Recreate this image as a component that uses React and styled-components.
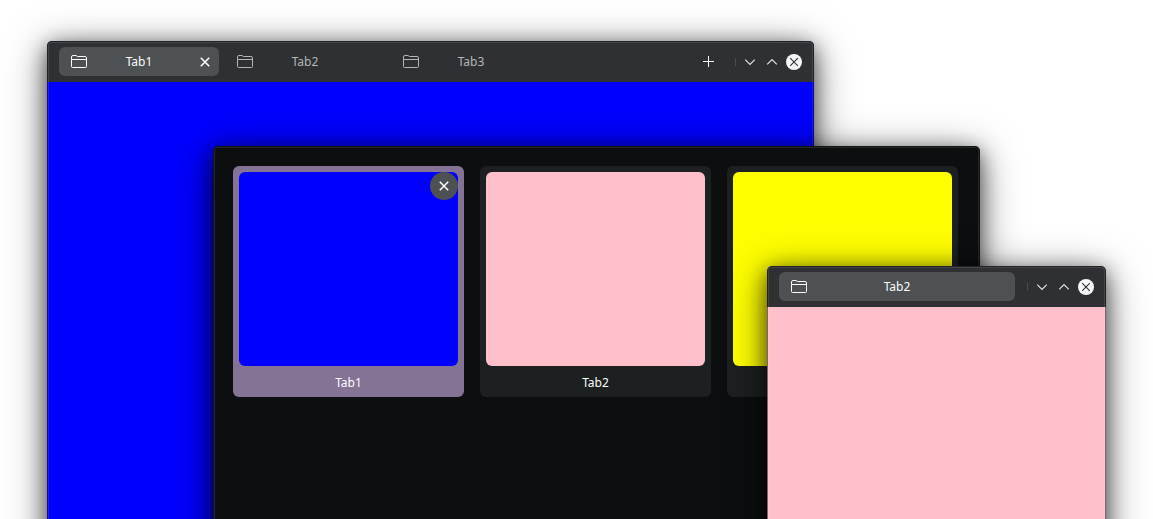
import React from "react";
import styled, { createGlobalStyle, css } from "styled-components";

const GlobalStyle = createGlobalStyle`
  * { box-sizing: border-box; }
  body {
    margin: 0;
    background: #ffffff;
    font-family: "Noto Sans", sans-serif;
    font-size: 12px;
    line-height: 16px;
  }
  button {
    margin: 0;
    padding: 0;
    border: 0;
    background: none;
    color: inherit;
    font: inherit;
  }
`;

const Desktop = styled.main`
  position: relative;
  height: 100vh;
  overflow: hidden;
`;

const Window = styled.section`
  position: absolute;
  left: ${(p) => p.$left}px;
  right: ${(p) => p.$right}px;
  top: ${(p) => p.$top}px;
  bottom: -40px;
  display: flex;
  flex-direction: column;
  overflow: hidden;
  border-radius: 5px;
  background: ${(p) => p.$color};
  box-shadow: 0 5px 20px rgba(0, 0, 0, 0.55), 0 8px 40px rgba(0, 0, 0, 0.5);

  &::after {
    content: "";
    position: absolute;
    inset: 0;
    border-radius: 5px;
    box-shadow: inset 0 0 0 1px rgba(0, 0, 0, 0.5),
      inset 0 0 0 2px rgba(255, 255, 255, 0.1);
    pointer-events: none;
  }
`;

const TitleBar = styled.header`
  display: flex;
  align-items: center;
  gap: 12px;
  height: 41px;
  padding: 0 12px;
  background: #2f3034;
  color: #fcfcfc;
`;

const TabList = styled.div`
  display: flex;
  flex: 1;
  gap: 6px;
`;

const TabItem = styled.div`
  display: flex;
  align-items: center;
  width: 160px;
  height: 29px;
  padding: 0 6px 0 12px;
  border-radius: 6px;
  color: #b4b5b7;
  ${(p) => p.$wide && css`
    width: auto;
    flex: 1;
  `}
  ${(p) => p.$active && css`
    background: #4d5153;
    color: #fcfcfc;
  `}
`;

const TabButton = styled.button`
  flex: 1;
  height: 100%;
  text-align: center;
`;

const TabEnd = styled.span`
  display: flex;
  justify-content: flex-end;
  width: 22px;
`;

const IconButton = styled.button`
  display: flex;
  align-items: center;
  justify-content: center;
  width: ${(p) => p.$size}px;
  height: ${(p) => p.$size}px;
`;

const WindowControls = styled.div`
  display: flex;
  align-items: center;
  gap: 6px;
`;

const Separator = styled.span`
  width: 1px;
  height: 8px;
  background: #4b4c50;
`;

const Overview = styled.div`
  display: grid;
  grid-template-columns: repeat(3, 1fr);
  gap: 16px;
  padding: 20px 22px 20px 20px;
`;

const Card = styled.article`
  position: relative;
  padding: 6px 6px 0;
  border-radius: 6px;
  background: ${(p) => (p.$active ? "#857396" : "#1d2021")};
  color: #fcfcfc;
`;

const Preview = styled.div`
  height: 194px;
  border-radius: 6px;
  background: ${(p) => p.$color};
`;

const CardButton = styled.button`
  display: block;
  width: 100%;
  height: 31px;
  padding-top: 2px;
  text-align: center;
`;

const CardClose = styled(IconButton)`
  position: absolute;
  top: 6px;
  right: 6px;
  border-radius: 50%;
  background: #4d5153;
`;

const FolderIcon = () => (
  <svg width="16" height="14" viewBox="0 0 16 14" fill="none" stroke="currentColor" aria-hidden="true">
    <path d="M.5 4.5V2Q.5.5 2 .5H5L6.5 1.5H14Q15.5 1.5 15.5 3V11.5Q15.5 12.5 14.5 12.5H1.5Q.5 12.5.5 11.5ZM.5 4.5H15.5" />
  </svg>
);

const CrossIcon = () => (
  <svg width="16" height="16" viewBox="0 0 16 16" fill="none" stroke="currentColor" strokeWidth="1.6" aria-hidden="true">
    <path d="M3.8 3.8L12.2 12.2M12.2 3.8L3.8 12.2" />
  </svg>
);

const PlusIcon = () => (
  <svg width="11" height="11" viewBox="0 0 11 11" stroke="currentColor" aria-hidden="true">
    <path d="M5.5 0V11M0 5.5H11" />
  </svg>
);

const ChevronIcon = ({ up }) => (
  <svg width="16" height="16" viewBox="0 0 16 16" fill="none" stroke="#e8e8e9" strokeWidth="1.1" aria-hidden="true">
    <path d={up ? "M3.2 10.3L8 5.5L12.8 10.3" : "M3.2 5.7L8 10.5L12.8 5.7"} />
  </svg>
);

const CloseIcon = () => (
  <svg width="16" height="16" viewBox="0 0 16 16" fill="none" aria-hidden="true">
    <circle cx="8" cy="8" r="8" fill="#f7f8f9" />
    <path d="M4.2 4.2L11.8 11.8M11.8 4.2L4.2 11.8" stroke="#2f3034" strokeWidth="1.1" />
  </svg>
);

function Tab({ name, active, wide, closable }) {
  return (
    <TabItem $active={active} $wide={wide}>
      <FolderIcon />
      <TabButton type="button">{name}</TabButton>
      <TabEnd>
        {closable && (
          <IconButton type="button" $size={16} aria-label={`Close ${name}`}>
            <CrossIcon />
          </IconButton>
        )}
      </TabEnd>
    </TabItem>
  );
}

function Controls() {
  return (
    <WindowControls>
      <Separator />
      <IconButton type="button" $size={16} aria-label="Minimize"><ChevronIcon /></IconButton>
      <IconButton type="button" $size={16} aria-label="Maximize"><ChevronIcon up /></IconButton>
      <IconButton type="button" $size={16} aria-label="Close window"><CloseIcon /></IconButton>
    </WindowControls>
  );
}

const pages = [
  { name: "Tab1", color: "#0000ff", active: true },
  { name: "Tab2", color: "#ffc0cb" },
  { name: "Tab3", color: "#ffff00" },
];

export default function App() {
  return (
    <>
      <GlobalStyle />
      <Desktop>
        <Window $left={47} $right={339} $top={41} $color="#0000ff">
          <TitleBar>
            <TabList>
              {pages.map((p) => (
                <Tab key={p.name} name={p.name} active={p.active} closable={p.active} />
              ))}
            </TabList>
            <IconButton type="button" $size={29} aria-label="New tab"><PlusIcon /></IconButton>
            <Controls />
          </TitleBar>
        </Window>
        <Window $left={213} $right={173} $top={146} $color="#0c0e0f">
          <Overview>
            {pages.map((p) => (
              <Card key={p.name} $active={p.active}>
                <Preview $color={p.color} />
                <CardButton type="button">{p.name}</CardButton>
                {p.active && (
                  <CardClose type="button" $size={28} aria-label={`Close ${p.name}`}>
                    <CrossIcon />
                  </CardClose>
                )}
              </Card>
            ))}
          </Overview>
        </Window>
        <Window $left={767} $right={47} $top={266} $color="#ffc0cb">
          <TitleBar>
            <TabList>
              <Tab name="Tab2" active wide />
            </TabList>
            <Controls />
          </TitleBar>
        </Window>
      </Desktop>
    </>
  );
}
